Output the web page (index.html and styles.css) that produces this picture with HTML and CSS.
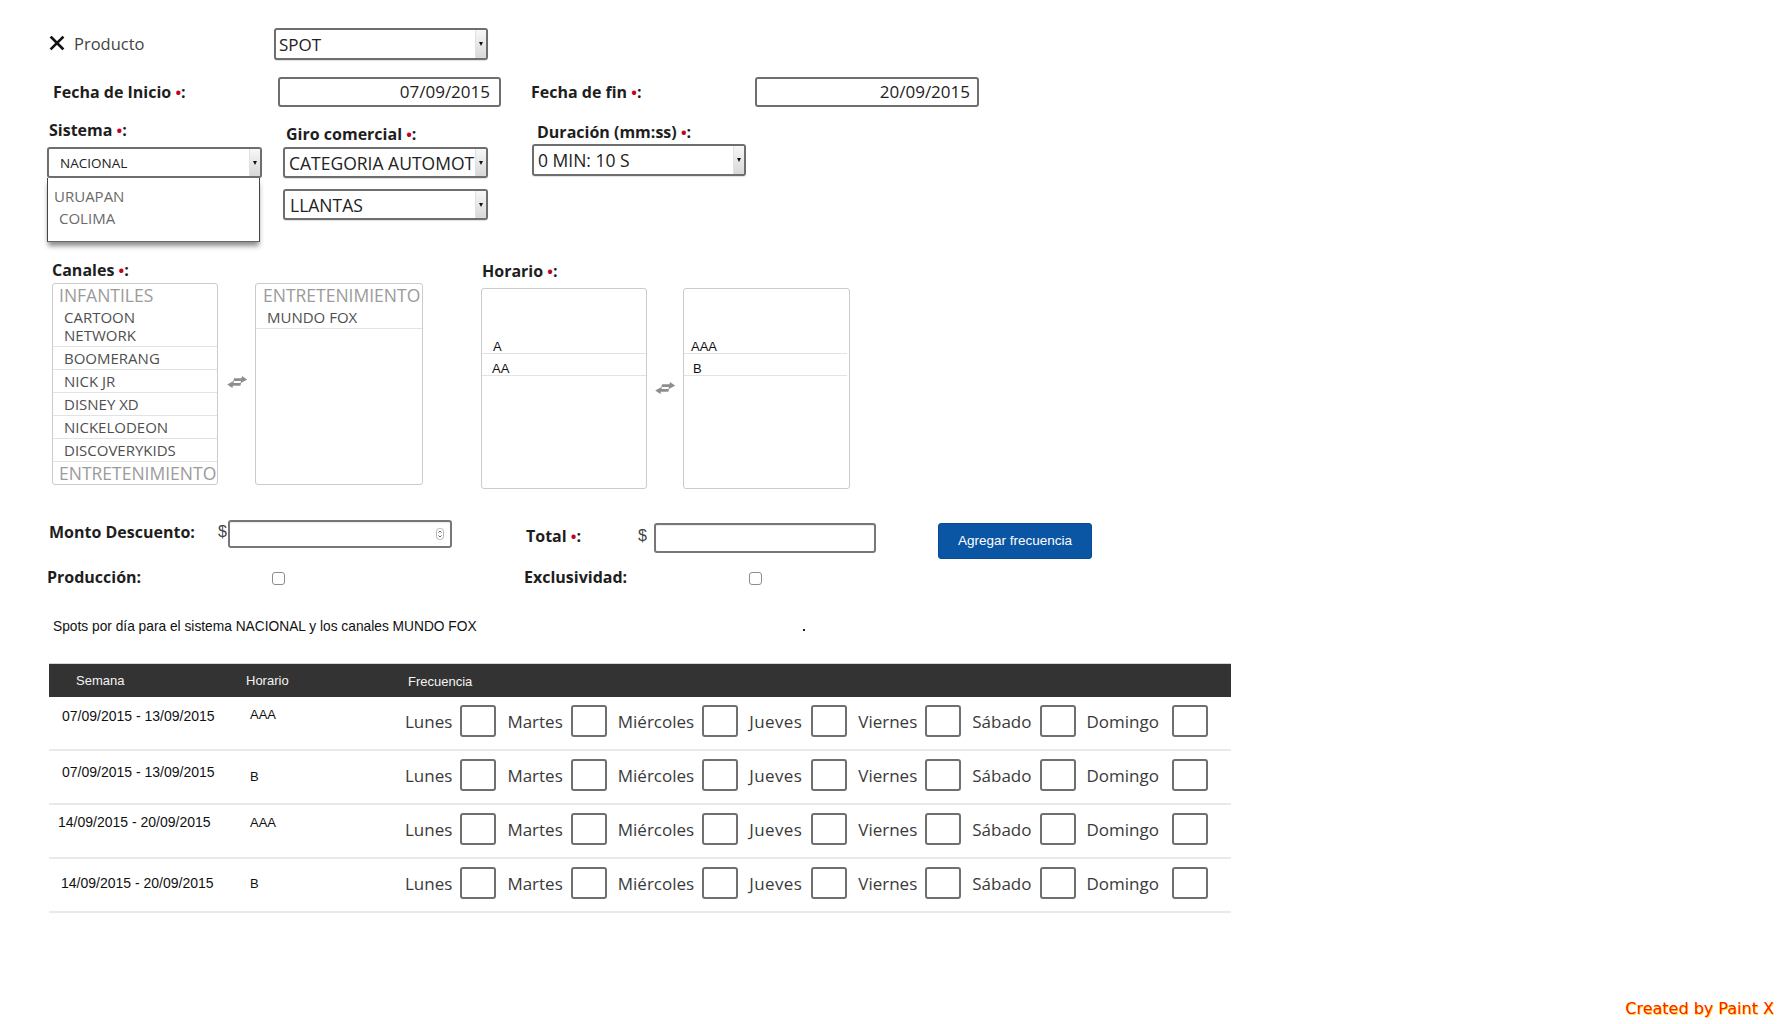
FILE: index.html
```html
<!DOCTYPE html>
<html lang="es">
<head>
<meta charset="utf-8">
<title>Frecuencia</title>
<link rel="stylesheet" href="styles.css">
</head>
<body>
<main class="page">
  <div class="row row-producto">
    <div class="producto-label">
      <svg class="icon-x" viewBox="0 0 16 16" width="16" height="16"><path d="M2.5 2.5 L13.5 13.5 M13.5 2.5 L2.5 13.5" stroke="#111" stroke-width="2.6" stroke-linecap="square"/></svg>
      <span>Producto</span>
    </div>
    <div class="select sel-spot"><span class="sel-text">SPOT</span><span class="caret"></span></div>
  </div>

  <div class="row row-fechas">
    <label class="lbl lbl-inicio">Fecha de Inicio <span class="req">•</span>:</label>
    <div class="date date-inicio">07/09/2015</div>
    <label class="lbl lbl-fin">Fecha de fin <span class="req">•</span>:</label>
    <div class="date date-fin">20/09/2015</div>
  </div>

  <div class="row row-sistema">
    <div class="col col-sistema">
      <label class="lbl">Sistema <span class="req">•</span>:</label>
      <div class="dropdown-wrap">
        <div class="select sel-nacional"><span class="sel-text">NACIONAL</span><span class="caret"></span></div>
        <ul class="dropdown">
          <li>URUAPAN</li>
          <li class="indent">COLIMA</li>
        </ul>
      </div>
    </div>
    <div class="col col-giro">
      <label class="lbl">Giro comercial <span class="req">•</span>:</label>
      <div class="select sel-cat"><span class="sel-text">CATEGORIA AUTOMOT</span><span class="caret"></span></div>
      <div class="select sel-llantas"><span class="sel-text">LLANTAS</span><span class="caret"></span></div>
    </div>
    <div class="col col-duracion">
      <label class="lbl">Duración (mm:ss) <span class="req">•</span>:</label>
      <div class="select sel-dur"><span class="sel-text">0 MIN: 10 S</span><span class="caret"></span></div>
    </div>
  </div>

  <div class="row row-listas">
    <div class="col col-canales">
      <label class="lbl">Canales <span class="req">•</span>:</label>
      <div class="dual">
        <ul class="list list-canales">
          <li class="grp">INFANTILES</li>
          <li class="item">CARTOON<br>NETWORK</li>
          <li class="item">BOOMERANG</li>
          <li class="item">NICK JR</li>
          <li class="item">DISNEY XD</li>
          <li class="item">NICKELODEON</li>
          <li class="item">DISCOVERYKIDS</li>
          <li class="grp">ENTRETENIMIENTO</li>
        </ul>
        <svg class="swap" viewBox="0 0 20 12" width="20" height="12"><g transform="skewX(-12) translate(1.5 0)" fill="#8e8e8e"><path d="M6 2.2 H13.5 V0 L19.5 3.6 L13.5 7.2 V5 H6 Z"/><path d="M14 7 H6.5 V4.8 L0.5 8.4 L6.5 12 V9.8 H14 Z"/></g></svg>
        <ul class="list list-canales list-right">
          <li class="grp">ENTRETENIMIENTO</li>
          <li class="item">MUNDO FOX</li>
        </ul>
      </div>
    </div>
    <div class="col col-horario">
      <label class="lbl">Horario <span class="req">•</span>:</label>
      <div class="dual">
        <ul class="list list-horario">
          <li class="hitem first">A</li>
          <li class="hitem">AA</li>
        </ul>
        <svg class="swap" viewBox="0 0 20 12" width="20" height="12"><g transform="skewX(-12) translate(1.5 0)" fill="#8e8e8e"><path d="M6 2.2 H13.5 V0 L19.5 3.6 L13.5 7.2 V5 H6 Z"/><path d="M14 7 H6.5 V4.8 L0.5 8.4 L6.5 12 V9.8 H14 Z"/></g></svg>
        <ul class="list list-horario list-horario-right">
          <li class="hitem">AAA</li>
          <li class="hitem second">B</li>
        </ul>
      </div>
    </div>
  </div>

  <div class="row row-monto">
    <label class="lbl lbl-monto">Monto Descuento:</label>
    <span class="dollar">$</span>
    <div class="input input-monto">
      <svg class="spinner" viewBox="0 0 8 12" width="8" height="12"><rect x="0.5" y="0.5" width="7" height="11" rx="3" fill="#fff" stroke="#b5b5b5"/><path d="M2.5 4.5 L4 3 L5.5 4.5 M2.5 7.5 L4 9 L5.5 7.5" fill="none" stroke="#555" stroke-width="0.9"/></svg>
    </div>
    <label class="lbl lbl-total">Total <span class="req">•</span>:</label>
    <span class="dollar dollar-total">$</span>
    <div class="input input-total"></div>
    <button class="btn" type="button">Agregar frecuencia</button>
  </div>

  <div class="row row-checks">
    <label class="lbl lbl-prod">Producción:</label>
    <input type="checkbox" class="chk">
    <label class="lbl lbl-excl">Exclusividad:</label>
    <input type="checkbox" class="chk">
  </div>

  <p class="spots">Spots por día para el sistema NACIONAL y los canales MUNDO FOX<span class="dot"></span></p>

  <section class="freq">
    <div class="thead">
      <span class="th-sem">Semana</span>
      <span class="th-hor">Horario</span>
      <span class="th-freq">Frecuencia</span>
    </div>

    <div class="trow r1">
      <span class="sem">07/09/2015 - 13/09/2015</span>
      <span class="hor">AAA</span>
      <div class="days">
        <div class="day"><span>Lunes</span><i class="box"></i></div>
        <div class="day"><span>Martes</span><i class="box"></i></div>
        <div class="day"><span>Miércoles</span><i class="box"></i></div>
        <div class="day"><span>Jueves</span><i class="box"></i></div>
        <div class="day"><span>Viernes</span><i class="box"></i></div>
        <div class="day"><span>Sábado</span><i class="box"></i></div>
        <div class="day"><span>Domingo</span><i class="box"></i></div>
      </div>
    </div>

    <div class="trow r2">
      <span class="sem">07/09/2015 - 13/09/2015</span>
      <span class="hor">B</span>
      <div class="days">
        <div class="day"><span>Lunes</span><i class="box"></i></div>
        <div class="day"><span>Martes</span><i class="box"></i></div>
        <div class="day"><span>Miércoles</span><i class="box"></i></div>
        <div class="day"><span>Jueves</span><i class="box"></i></div>
        <div class="day"><span>Viernes</span><i class="box"></i></div>
        <div class="day"><span>Sábado</span><i class="box"></i></div>
        <div class="day"><span>Domingo</span><i class="box"></i></div>
      </div>
    </div>

    <div class="trow r3">
      <span class="sem">14/09/2015 - 20/09/2015</span>
      <span class="hor">AAA</span>
      <div class="days">
        <div class="day"><span>Lunes</span><i class="box"></i></div>
        <div class="day"><span>Martes</span><i class="box"></i></div>
        <div class="day"><span>Miércoles</span><i class="box"></i></div>
        <div class="day"><span>Jueves</span><i class="box"></i></div>
        <div class="day"><span>Viernes</span><i class="box"></i></div>
        <div class="day"><span>Sábado</span><i class="box"></i></div>
        <div class="day"><span>Domingo</span><i class="box"></i></div>
      </div>
    </div>

    <div class="trow r4">
      <span class="sem">14/09/2015 - 20/09/2015</span>
      <span class="hor">B</span>
      <div class="days">
        <div class="day"><span>Lunes</span><i class="box"></i></div>
        <div class="day"><span>Martes</span><i class="box"></i></div>
        <div class="day"><span>Miércoles</span><i class="box"></i></div>
        <div class="day"><span>Jueves</span><i class="box"></i></div>
        <div class="day"><span>Viernes</span><i class="box"></i></div>
        <div class="day"><span>Sábado</span><i class="box"></i></div>
        <div class="day"><span>Domingo</span><i class="box"></i></div>
      </div>
    </div>
  </section>
</main>
<div class="credit">Created by Paint X</div>
</body>
</html>
```
FILE: styles.css
```css
* { box-sizing: border-box; }
html, body { margin: 0; padding: 0; background: #fff; }
body {
  font-family: "Open Sans", "Noto Sans", sans-serif;
  color: #222;
  width: 1780px;
  height: 1024px;
  overflow: hidden;
  position: relative;
}
.page { padding: 28px 0 0 47px; }
.row { display: flex; }
.col { display: flex; flex-direction: column; }

.lbl {
  font-weight: 700;
  font-size: 16px;
  line-height: 20px;
  color: #1e1e1e;
  white-space: nowrap;
}
.req { color: #c3001e; font-size: 15px; line-height: 1; }

/* selects */
.select {
  display: flex;
  align-items: center;
  border: 2px solid #6e6e6e;
  border-radius: 3px;
  background: #fff;
  box-shadow: 0 1px 1px rgba(0,0,0,.12);
  overflow: hidden;
}
.sel-text {
  flex: 1;
  white-space: nowrap;
  font-size: 17.5px;
  color: #222;
  padding-left: 4px;
}
.caret {
  width: 11px;
  align-self: stretch;
  background: linear-gradient(#f7f7f7, #d8d8d8);
  border-left: 1px solid #e2e2e2;
  display: flex;
  align-items: center;
  justify-content: center;
}
.caret::after {
  content: "";
  border-top: 4px solid #111;
  border-left: 2.5px solid transparent;
  border-right: 2.5px solid transparent;
}

/* row 1 */
.row-producto { height: 32px; align-items: center; }
.producto-label {
  width: 227px;
  padding-left: 2px;
  margin-bottom: 2px;
  display: flex;
  align-items: center;
  font-size: 16.5px;
  color: #444;
}
.icon-x { width: 16px; height: 16px; margin-right: 9px; }
.sel-spot { width: 214px; height: 32px; }
.sel-spot .sel-text { padding-left: 3px; font-size: 17px; }

/* row 2 */
.row-fechas { margin-top: 17px; padding-left: 6px; align-items: center; }
.lbl-inicio { width: 225px; }
.date {
  height: 30px;
  border: 2px solid #6e6e6e;
  border-radius: 3px;
  text-align: right;
  font-size: 17px;
  line-height: 26px;
  color: #222;
}
.date-inicio { width: 223px; padding-right: 9px; }
.lbl-fin { width: 224px; margin-left: 30px; }
.date-fin { width: 224px; padding-right: 7px; }

/* row 3 */
.col-sistema { width: 215px; margin-right: 21px; }
.col-sistema .lbl { margin-top: 13px; padding-left: 2px; }
.dropdown-wrap { position: relative; margin-top: 7px; }
.sel-nacional { height: 31px; }
.sel-nacional .sel-text { font-size: 13.5px; padding-left: 11px; }
.dropdown {
  position: absolute;
  top: 100%;
  left: 0;
  width: 213px;
  height: 64px;
  margin: 0;
  padding: 7px 0 0 6px;
  list-style: none;
  background: #fff;
  border-left: 1px solid #444;
  border-right: 1px solid #444;
  border-bottom: 1px solid #666;
  box-shadow: 0 5px 5px -1px rgba(0,0,0,.45);
  font-size: 15px;
  line-height: 22px;
  color: #6a6a6a;
}
.dropdown .indent { padding-left: 5px; }

.col-giro { width: 205px; margin-right: 44px; }
.col-giro .lbl { margin-top: 17px; padding-left: 3px; }
.sel-cat { margin-top: 3px; height: 31px; }
.sel-llantas { margin-top: 11px; height: 31px; }
.sel-llantas .sel-text { padding-left: 5px; }

.col-duracion { width: 214px; }
.col-duracion .lbl { margin-top: 15px; padding-left: 5px; }
.sel-dur { margin-top: 2px; height: 32px; }

/* row 4 */
.row-listas { margin-top: 40px; align-items: flex-start; }
.col-canales { padding-left: 5px; margin-right: 58px; }
.col-canales .dual { margin-top: 3px; }
.col-horario .lbl { margin-top: 1px; padding-left: 1px; }
.col-horario .dual { margin-top: 7px; }
.dual { display: flex; align-items: center; }
.swap { width: 20px; height: 12px; margin: 0 8px 4px 9px; }
.col-horario .swap { margin: 0 8px 2px 8px; }

.list {
  list-style: none;
  margin: 0;
  padding: 0;
  border: 1px solid #cbcbcb;
  border-radius: 3px;
  overflow: hidden;
  background: #fff;
}
.list-canales { width: 166px; height: 202px; }
.list-right { width: 168px; }
.grp {
  font-size: 17.5px;
  line-height: 22px;
  color: #9b9b9b;
  padding-left: 6px;
  white-space: nowrap;
}
.list-right .grp { padding-left: 7px; }
.item {
  font-size: 15px;
  line-height: 18px;
  padding: 2px 0 2px 11px;
  color: #4f4f4f;
  border-bottom: 1px solid #e3e3e3;
}

.list-horario {
  width: 166px;
  height: 201px;
  padding-top: 43px;
  font-family: "Liberation Sans", Arial, sans-serif;
}
.list-horario-right { width: 167px; }
.hitem {
  font-size: 13px;
  line-height: 13px;
  padding: 8px 0 0 10px;
  height: 22px;
  color: #111;
  border-bottom: 1px solid #e3e3e3;
}
.hitem.first { padding-left: 11px; }
.list-horario-right .hitem { padding-left: 7px; margin-right: 2px; }
.list-horario-right .hitem.second { padding-left: 9px; }

/* row 5 */
.row-monto { margin-top: 26px; align-items: flex-start; }
.lbl-monto { margin: 7px 0 0 2px; width: 169px; }
.dollar {
  width: 8px;
  margin-top: 7px;
  font: 16px/20px "Liberation Sans", Arial, sans-serif;
  color: #444;
}
.input {
  border: 2px solid #777;
  border-radius: 3px;
  background: #fff;
  box-shadow: inset 0 1px 1px rgba(0,0,0,.08);
}
.input-monto {
  width: 224px;
  height: 28px;
  margin: 5px 0 0 2px;
  display: flex;
  align-items: center;
  justify-content: flex-end;
  padding-right: 6px;
}
.spinner { width: 8px; height: 12px; }
.lbl-total { margin: 11px 0 0 74px; width: 112px; }
.dollar-total { margin-top: 11px; }
.input-total { width: 222px; height: 30px; margin: 8px 0 0 8px; }
.btn {
  margin: 8px 0 0 62px;
  width: 154px;
  height: 36px;
  background: #0b55a5;
  border: 1px solid #094b92;
  border-radius: 3px;
  color: #fff;
  font: 13.5px/16px "Liberation Sans", Arial, sans-serif;
  padding: 0;
}

/* row 6 */
.row-checks { margin-top: 8px; align-items: flex-start; }
.lbl-prod { width: 225px; }
.chk {
  -webkit-appearance: none;
  appearance: none;
  width: 13px;
  height: 13px;
  margin: 5px 0 0;
  border: 1px solid #8d8d8d;
  border-radius: 3px;
  background: #fff;
}
.lbl-excl { width: 225px; margin-left: 239px; }

/* spots */
.spots {
  margin: 31px 0 0 6px;
  font: 13.75px/18px "Liberation Sans", Arial, sans-serif;
  color: #111;
}
.dot {
  display: inline-block;
  width: 2px;
  height: 2px;
  background: #222;
  margin-left: 326px;
  vertical-align: 0;
}

/* table */
.freq {
  margin: 27px 0 0 2px;
  width: 1182px;
  border-top: 1px solid #d6d6d6;
}
.thead {
  display: grid;
  grid-template-columns: 188px 158px 1fr;
  height: 33px;
  align-items: center;
  background: #333;
  color: #f4f4f4;
  font: 13px/16px "Liberation Sans", Arial, sans-serif;
}
.th-sem { padding-left: 27px; }
.th-hor { padding-left: 9px; }
.th-freq { padding-left: 13px; margin-top: 3px; }

.trow {
  display: grid;
  grid-template-columns: 188px 158px 1fr;
  height: 54px;
  align-items: center;
  border-bottom: 2px solid #e9e9e9;
}
.sem {
  padding-left: 13px;
  font: 14px/16px "Liberation Sans", Arial, sans-serif;
  color: #111;
}
.hor {
  padding-left: 13px;
  font: 13px/16px "Liberation Sans", Arial, sans-serif;
  color: #111;
}
.days { display: flex; align-items: center; padding-left: 10px; margin-bottom: 4px; }
.day { display: flex; align-items: center; margin-right: 11px; }
.day span { font-size: 17px; color: #3a3a3a; margin-right: 8px; }
.day:nth-child(4) span { margin-right: 9px; letter-spacing: 0.4px; }
.day:last-child span { margin-right: 13px; }
.box {
  display: block;
  width: 36px;
  height: 32px;
  border: 2px solid #6f6f6f;
  border-radius: 3px;
}
.r1 .sem { margin-bottom: 14px; }
.r1 .hor { margin-bottom: 16px; }
.r2 .sem { margin-bottom: 10px; }
.r3 .sem { margin-bottom: 18px; padding-left: 9px; }
.r3 .hor { margin-bottom: 16px; }
.r4 .sem { margin-bottom: 4px; padding-left: 12px; }
.r4 .hor { margin-bottom: 2px; }

/* watermark */
.credit {
  position: absolute;
  right: 6px;
  bottom: 6px;
  font: 16px/18px "DejaVu Sans", Verdana, sans-serif;
  color: #ff2200;
  text-shadow: 1px 1px 0 #ffe000;
}
```
